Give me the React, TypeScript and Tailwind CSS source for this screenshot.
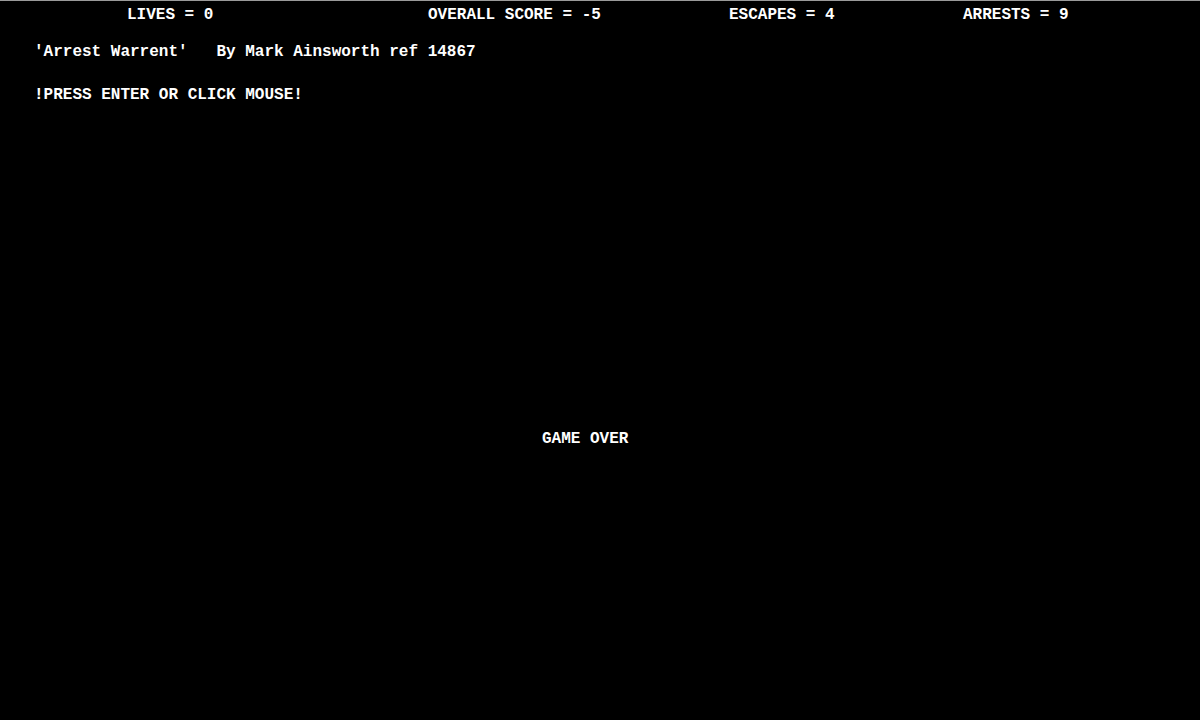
export default function App() {
  return (
    <div
      className="w-[1200px] h-[720px] bg-black text-white border-t border-[#9a9a9a] overflow-hidden text-[16px] leading-[18px] font-bold"
      style={{ fontFamily: '"Liberation Mono", "DejaVu Sans Mono", monospace' }}
    >
      {/* status bar */}
      <div className="flex pt-[5px] pl-[127px] whitespace-pre">
        <div className="w-[301px]">LIVES = 0</div>
        <div className="w-[301px]">OVERALL SCORE = -5</div>
        <div className="w-[234px]">ESCAPES = 4</div>
        <div>ARRESTS = 9</div>
      </div>

      <div className="pl-[34px] pt-[19px] whitespace-pre">
        'Arrest Warrent'   By Mark Ainsworth ref 14867
      </div>
      <div className="pl-[34px] pt-[25px] whitespace-pre">
        !PRESS ENTER OR CLICK MOUSE!
      </div>

      <div className="pl-[542px] pt-[326px] whitespace-pre">GAME OVER</div>
    </div>
  );
}
